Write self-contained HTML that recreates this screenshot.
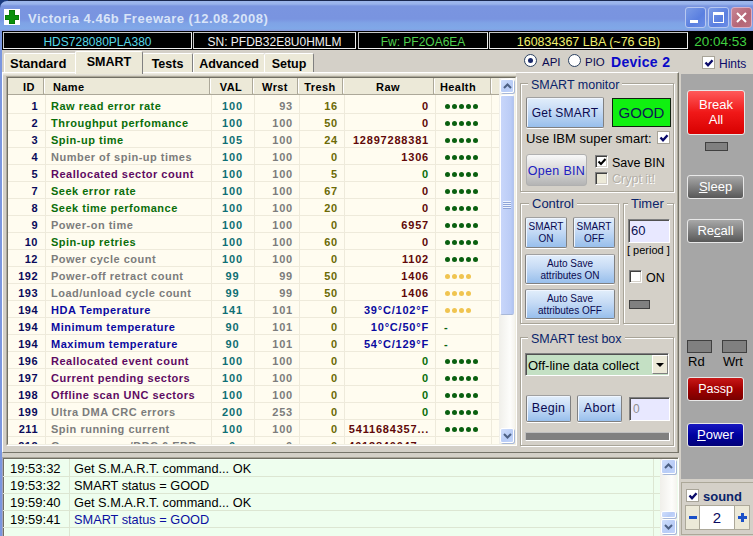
<!DOCTYPE html>
<html><head><meta charset="utf-8"><title>Victoria 4.46b Freeware</title>
<style>
*{margin:0;padding:0;box-sizing:border-box}
html,body{width:753px;height:536px;overflow:hidden}
body{position:relative;background:#D4D0C8;font-family:"Liberation Sans",sans-serif;font-size:12px;color:#000}
.a{position:absolute}
i{font-style:normal}
/* window frame */
#top0{left:0;top:0;width:753px;height:1px;background:#1A2850}
#frameL{left:0;top:31px;width:2px;height:505px;background:#7A96DF}
#title{left:0;top:1px;width:753px;height:30px;border-radius:7px 0 0 0;
 background:linear-gradient(#9CB6EC 0px,#9AB4EC 3px,#7A95E0 5px,#7994E0 18px,#7FA3E6 22px,#80A8E8 28px,#8A96D8 30px)}
#ico{left:4px;top:9px;width:16px;height:16px;background:#FFFFFF}
#ttext{left:28px;top:11px;font-size:13px;line-height:16px;font-weight:bold;color:#D8E4F8;white-space:nowrap;letter-spacing:0.5px}
.tb{top:7px;width:21px;height:21px;border:1px solid #B8C8F0;border-radius:3px;background:linear-gradient(135deg,#7C9CE6,#5A7FE0 60%,#6B8DE6)}
#tmin{left:685px}
#tmax{left:708px}
#tcls{left:731px;background:linear-gradient(135deg,#C88494,#B46676 60%,#BC7080);border-color:#D8B0C8}
/* info bar */
#info{left:2px;top:31px;width:751px;height:19px;background:#000}
.ib{top:32px;height:17px;border:1px solid #C8C8C8;border-right-color:#F0F0F0;border-bottom-color:#F0F0F0;background:#000;text-align:center;font-size:12px;line-height:15px;padding-top:2px;white-space:nowrap}
/* tabs */
.tab{top:53px;height:19px;background:#ECE9D8;border-top:1px solid #FFF;border-left:1px solid #FFF;border-right:1px solid #808080;font-weight:bold;font-size:12.5px;text-align:center;line-height:18px;padding-top:1px;border-radius:2px 2px 0 0}
#tabsel{top:51px;height:23px;line-height:18px;padding-top:1px;z-index:2}
#page{left:2px;top:72px;width:677px;height:381px;border-top:1px solid #FFF;border-left:1px solid #FFF;border-right:1px solid #76746A;border-bottom:1px solid #76746A}
/* table */
#tbl{left:6px;top:76px;width:511px;height:370px;border:1px solid #ACA899;border-right-color:#FFF;border-bottom-color:#FFF;background:#FFFCF0;overflow:hidden}
#tblin{left:7px;top:77px;width:509px;height:368px;border:1px solid #716F64;border-right-color:#F1EFE2;border-bottom-color:#F1EFE2}
#hdr{left:8px;top:78px;width:491px;height:17px;background:#ECE9D8;border-bottom:1px solid #ACA899}
.hc{top:78px;height:16px;font-weight:bold;font-size:11px;letter-spacing:0.4px;line-height:18px;text-align:center;border-right:1px solid #ACA899}
.hc:after{content:"";position:absolute;right:-2px;top:1px;width:1px;height:14px;background:#FFF}
.vl{position:absolute;top:95px;width:1px;height:350px;background:#EEEADB}
.hl{position:absolute;left:8px;width:491px;height:1px;background:#EEEADB}
.tr{position:absolute;left:0;width:500px;height:17px;font-weight:bold;font-size:11px;letter-spacing:0.5px;line-height:18px}
.c{position:absolute;top:0;white-space:nowrap}
.cid{left:8px;width:30px;text-align:right;color:#0A0A5A}
.cnm{left:51px;color:#006600}
.ng{color:#0A6E0A}.ns{color:#7C7C7C}.np{color:#5E0A62}.nb{color:#0A0AA0}
.cval{left:210px;width:45px;text-align:center;color:#0F6F74;letter-spacing:0.8px}
.cwr{left:254px;width:39px;text-align:right;color:#7C7C7C;letter-spacing:0.8px}
.ctr{left:298px;width:40px;text-align:right;color:#6C6A06;letter-spacing:0.8px}
.craw{left:343px;width:86px;text-align:right;letter-spacing:0.8px}
.rr{color:#600808}.rg{color:#0A6E0A}.rb{color:#0A0AA0}
.chl{left:444px}
.hg,.hy{display:block;position:absolute;top:7px;left:1px;height:6px;width:40px}
.hg b,.hy b{float:left;width:5px;height:5px;border-radius:50%;margin-right:2px;background:#0A6010}
.hy b{background:#F0C450}
.hd{color:#0A6010}
/* scrollbar */
#sb{left:499px;top:78px;width:16px;height:366px;background:linear-gradient(90deg,#F0EFEA,#FDFDFB 70%,#F4F3EE)}
.sbtn{width:14px;height:14px;border:1px solid #FFF;border-radius:2px;background:linear-gradient(135deg,#D0DEFC,#B8CCF6 60%,#C4D6FC);box-shadow:1px 1px 0 #A8B8D8}
#sbup{left:500px;top:79px}
#sbdn{left:500px;top:428px;height:15px}
#thumb{left:500px;top:95px;width:14px;height:220px;border:1px solid #FFF;border-right-color:#B4C4EC;border-bottom-color:#A8B8D8;border-radius:2px;background:linear-gradient(90deg,#C8D6FA,#BBCCF6 80%,#B0C4F2)}
/* splitter */
#split{display:none}
/* log */
#log{left:2px;top:457px;width:677px;height:79px;background:#EEFEEE;border-top:1px solid #A8A498;border-left:1px solid #A4A6C0;border-right:1px solid #FFF;box-shadow:inset 1px 1px 0 #716F64,inset 2px 2px 0 #F6FFF6}
.lr{position:absolute;left:0;width:657px;height:17px;font-size:12.5px;line-height:17px;white-space:nowrap;border-bottom:1px solid #DCE6D2}
.lt{position:absolute;left:7px;font-size:13px}
.lm{position:absolute;left:71px;font-size:12.75px}
#lsep{left:69px;top:459px;width:1px;height:77px;background:#DCE6D2}
#lsep2{left:653px;top:459px;width:1px;height:77px;background:#DCE6D2}
#lsb{left:660px;top:459px;width:17px;height:77px;background:linear-gradient(90deg,#F0EFEA,#FDFDFB 70%,#F4F3EE)}
/* group boxes */
.gb{border:1px solid #A8A498;box-shadow:inset 1px 1px 0 #FFF,1px 1px 0 #FFF}
.gt{background:#D4D0C8;padding:0 3px;color:#0A246A;font-size:12.5px;line-height:14px;white-space:nowrap}
.bb{border:1px solid #808080;border-top-color:#A0A0A0;border-radius:2px;background:linear-gradient(#E2EEFB,#C6DBF5 45%,#98BFEC);color:#0A0A50;text-align:center;white-space:nowrap;box-shadow:0 1px 0 #FFF,inset 1px 1px 0 #F0F6FF}
.cb{width:13px;height:13px;background:#FFF;border:1px solid #808080;border-right-color:#FFF;border-bottom-color:#FFF;box-shadow:inset 1px 1px 0 #404040,inset -1px -1px 0 #D4D0C8}
.cbf{border:1px solid #A8A498;box-shadow:none}
.rbtn{border:1px solid #E8E8E8;border-radius:3px;color:#FFF;text-align:center;white-space:nowrap}
.led{background:#808080;border:1px solid #404040}
/* right panel */
#rp{left:681px;top:74px;width:72px;height:405px;background:#A6A6A6}
</style></head><body>
<div class="a" id="top0"></div><div class="a" style="left:0;top:0;width:8px;height:8px;background:#1A3A80"></div>
<div class="a" id="title"></div>
<div class="a" id="frameL"></div>
<div class="a" id="ico"><svg width="16" height="16" viewBox="0 0 16 16"><path d="M5 1h6v5h4v5h-4v4h-6v-4h-4v-5h4z" fill="#006A00"/><path d="M5.5 1.5h5v5h4v4h-4v4h-5v-4h-4v-4h4z" fill="#0C900C"/></svg></div>
<div class="a" id="ttext">Victoria 4.46b Freeware (12.08.2008)</div>
<div class="a tb" id="tmin"><div class="a" style="left:4px;top:12px;width:8px;height:3px;background:#FFF"></div></div>
<div class="a tb" id="tmax"><div class="a" style="left:4px;top:4px;width:11px;height:11px;border:1px solid #FFF;border-top-width:3px"></div></div>
<div class="a tb" id="tcls"><svg class="a" style="left:3px;top:3px" width="13" height="13" viewBox="0 0 13 13"><path d="M2 2L11 11M11 2L2 11" stroke="#FFF" stroke-width="2"/></svg></div>

<div class="a" id="info"></div>
<div class="a ib" style="left:3px;width:189px;color:#58D8E8">HDS728080PLA380</div>
<div class="a ib" style="left:193px;width:163px;color:#F0F0F0">SN: PFDB32E8U0HMLM</div>
<div class="a ib" style="left:358px;width:130px;color:#50D050">Fw: PF2OA6EA</div>
<div class="a ib" style="left:489px;width:199px;color:#F0F070;font-size:12.5px">160834367 LBA (~76 GB)</div>
<div class="a" style="left:688px;top:32px;width:65px;height:17px;color:#40D040;text-align:center;font-size:13.5px;line-height:17px;padding-top:1px">20:04:53</div>

<div class="a" id="page"></div>
<div class="a tab" style="left:4px;width:72px;font-size:13px;text-align:left;padding-left:5px">Standard</div>
<div class="a tab" id="tabsel" style="left:75px;width:68px">SMART</div>
<div class="a tab" style="left:142px;width:51px">Tests</div>
<div class="a tab" style="left:193px;width:72px">Advanced</div>
<div class="a tab" style="left:264px;width:50px">Setup</div>

<!-- radio row -->
<div class="a" style="left:524px;top:54px;width:13px;height:13px;border-radius:50%;border:1.5px solid #2A4060;background:#FFFFFF"><div class="a" style="left:3px;top:3px;width:5px;height:5px;border-radius:50%;background:#21A121;background:#1A2A6A"></div></div>
<div class="a" style="left:542px;top:55px;font-size:11.5px;line-height:14px;color:#0A0A50">API</div>
<div class="a" style="left:568px;top:54px;width:13px;height:13px;border-radius:50%;border:1.5px solid #2A4060;background:#FFFFFF"></div>
<div class="a" style="left:585px;top:55px;font-size:11.5px;line-height:14px;color:#0A0A50">PIO</div>
<div class="a" style="left:611px;top:54px;font-size:14px;font-weight:bold;line-height:16px;letter-spacing:0.3px;color:#0A0AC8">Device 2</div>
<div class="a cb cbf" style="left:702px;top:56px;"><svg class="a" style="left:1px;top:1px" width="10" height="10" viewBox="0 0 10 10"><path d="M1.5 4.5L4 7.2L8.5 2.2" stroke="#0A0A6A" stroke-width="2.4" fill="none"/></svg></div>
<div class="a" style="left:719px;top:57px;font-size:12px;line-height:14px;color:#0A0A6A">Hints</div>

<!-- table -->
<div class="a" style="left:3px;top:73px;width:513px;height:3px;background:linear-gradient(#F2F0E6,#E2DFD4 60%,#CFCCC0)"></div>
<div class="a" id="tbl"></div>
<div class="a" id="tblin"></div>
<div class="a" style="left:0;top:0;width:499px;height:444px;overflow:hidden">
<div class="vl" style="left:45px"></div>
<div class="vl" style="left:211px"></div>
<div class="vl" style="left:254px"></div>
<div class="vl" style="left:299px"></div>
<div class="vl" style="left:344px"></div>
<div class="vl" style="left:435px"></div>
<div class="vl" style="left:491px"></div>
<div class="vl" style="left:499px"></div>
<div class="hl" style="top:113px"></div>
<div class="hl" style="top:130px"></div>
<div class="hl" style="top:147px"></div>
<div class="hl" style="top:164px"></div>
<div class="hl" style="top:181px"></div>
<div class="hl" style="top:198px"></div>
<div class="hl" style="top:215px"></div>
<div class="hl" style="top:232px"></div>
<div class="hl" style="top:249px"></div>
<div class="hl" style="top:266px"></div>
<div class="hl" style="top:283px"></div>
<div class="hl" style="top:300px"></div>
<div class="hl" style="top:317px"></div>
<div class="hl" style="top:334px"></div>
<div class="hl" style="top:351px"></div>
<div class="hl" style="top:368px"></div>
<div class="hl" style="top:385px"></div>
<div class="hl" style="top:402px"></div>
<div class="hl" style="top:419px"></div>
<div class="hl" style="top:436px"></div>
<div class="hl" style="top:453px"></div>
<div class="tr" style="top:97px"><i class="c cid">1</i><i class="c cnm ng">Raw read error rate</i><i class="c cval">100</i><i class="c cwr">93</i><i class="c ctr">16</i><i class="c craw rr">0</i><i class="c chl"><span class="hg"><b></b><b></b><b></b><b></b><b></b></span></i></div>
<div class="tr" style="top:114px"><i class="c cid">2</i><i class="c cnm ng">Throughput perfomance</i><i class="c cval">100</i><i class="c cwr">100</i><i class="c ctr">50</i><i class="c craw rr">0</i><i class="c chl"><span class="hg"><b></b><b></b><b></b><b></b><b></b></span></i></div>
<div class="tr" style="top:131px"><i class="c cid">3</i><i class="c cnm ng">Spin-up time</i><i class="c cval">105</i><i class="c cwr">100</i><i class="c ctr">24</i><i class="c craw rr">12897288381</i><i class="c chl"><span class="hg"><b></b><b></b><b></b><b></b><b></b></span></i></div>
<div class="tr" style="top:148px"><i class="c cid">4</i><i class="c cnm ns">Number of spin-up times</i><i class="c cval">100</i><i class="c cwr">100</i><i class="c ctr">0</i><i class="c craw rr">1306</i><i class="c chl"><span class="hg"><b></b><b></b><b></b><b></b><b></b></span></i></div>
<div class="tr" style="top:165px"><i class="c cid">5</i><i class="c cnm np">Reallocated sector count</i><i class="c cval">100</i><i class="c cwr">100</i><i class="c ctr">5</i><i class="c craw rg">0</i><i class="c chl"><span class="hg"><b></b><b></b><b></b><b></b><b></b></span></i></div>
<div class="tr" style="top:182px"><i class="c cid">7</i><i class="c cnm ng">Seek error rate</i><i class="c cval">100</i><i class="c cwr">100</i><i class="c ctr">67</i><i class="c craw rr">0</i><i class="c chl"><span class="hg"><b></b><b></b><b></b><b></b><b></b></span></i></div>
<div class="tr" style="top:199px"><i class="c cid">8</i><i class="c cnm ng">Seek time perfomance</i><i class="c cval">100</i><i class="c cwr">100</i><i class="c ctr">20</i><i class="c craw rr">0</i><i class="c chl"><span class="hg"><b></b><b></b><b></b><b></b><b></b></span></i></div>
<div class="tr" style="top:216px"><i class="c cid">9</i><i class="c cnm ns">Power-on time</i><i class="c cval">100</i><i class="c cwr">100</i><i class="c ctr">0</i><i class="c craw rr">6957</i><i class="c chl"><span class="hg"><b></b><b></b><b></b><b></b><b></b></span></i></div>
<div class="tr" style="top:233px"><i class="c cid">10</i><i class="c cnm ng">Spin-up retries</i><i class="c cval">100</i><i class="c cwr">100</i><i class="c ctr">60</i><i class="c craw rr">0</i><i class="c chl"><span class="hg"><b></b><b></b><b></b><b></b><b></b></span></i></div>
<div class="tr" style="top:250px"><i class="c cid">12</i><i class="c cnm ns">Power cycle count</i><i class="c cval">100</i><i class="c cwr">100</i><i class="c ctr">0</i><i class="c craw rr">1102</i><i class="c chl"><span class="hg"><b></b><b></b><b></b><b></b><b></b></span></i></div>
<div class="tr" style="top:267px"><i class="c cid">192</i><i class="c cnm ns">Power-off retract count</i><i class="c cval">99</i><i class="c cwr">99</i><i class="c ctr">50</i><i class="c craw rr">1406</i><i class="c chl"><span class="hy"><b></b><b></b><b></b><b></b></span></i></div>
<div class="tr" style="top:284px"><i class="c cid">193</i><i class="c cnm ns">Load/unload cycle count</i><i class="c cval">99</i><i class="c cwr">99</i><i class="c ctr">50</i><i class="c craw rr">1406</i><i class="c chl"><span class="hy"><b></b><b></b><b></b><b></b></span></i></div>
<div class="tr" style="top:301px"><i class="c cid">194</i><i class="c cnm nb">HDA Temperature</i><i class="c cval">141</i><i class="c cwr">101</i><i class="c ctr">0</i><i class="c craw rb">39&deg;C/102&deg;F</i><i class="c chl"><span class="hy"><b></b><b></b><b></b><b></b></span></i></div>
<div class="tr" style="top:318px"><i class="c cid">194</i><i class="c cnm nb">Minimum temperature</i><i class="c cval">90</i><i class="c cwr">101</i><i class="c ctr">0</i><i class="c craw rb">10&deg;C/50&deg;F</i><i class="c chl"><span class="hd">-</span></i></div>
<div class="tr" style="top:335px"><i class="c cid">194</i><i class="c cnm nb">Maximum temperature</i><i class="c cval">90</i><i class="c cwr">101</i><i class="c ctr">0</i><i class="c craw rb">54&deg;C/129&deg;F</i><i class="c chl"><span class="hd">-</span></i></div>
<div class="tr" style="top:352px"><i class="c cid">196</i><i class="c cnm np">Reallocated event count</i><i class="c cval">100</i><i class="c cwr">100</i><i class="c ctr">0</i><i class="c craw rg">0</i><i class="c chl"><span class="hg"><b></b><b></b><b></b><b></b><b></b></span></i></div>
<div class="tr" style="top:369px"><i class="c cid">197</i><i class="c cnm np">Current pending sectors</i><i class="c cval">100</i><i class="c cwr">100</i><i class="c ctr">0</i><i class="c craw rg">0</i><i class="c chl"><span class="hg"><b></b><b></b><b></b><b></b><b></b></span></i></div>
<div class="tr" style="top:386px"><i class="c cid">198</i><i class="c cnm np">Offline scan UNC sectors</i><i class="c cval">100</i><i class="c cwr">100</i><i class="c ctr">0</i><i class="c craw rg">0</i><i class="c chl"><span class="hg"><b></b><b></b><b></b><b></b><b></b></span></i></div>
<div class="tr" style="top:403px"><i class="c cid">199</i><i class="c cnm ns">Ultra DMA CRC errors</i><i class="c cval">200</i><i class="c cwr">253</i><i class="c ctr">0</i><i class="c craw rg">0</i><i class="c chl"><span class="hg"><b></b><b></b><b></b><b></b><b></b></span></i></div>
<div class="tr" style="top:420px"><i class="c cid">211</i><i class="c cnm ns">Spin running current</i><i class="c cval">100</i><i class="c cwr">100</i><i class="c ctr">0</i><i class="c craw rr">5411684357...</i><i class="c chl"><span class="hg"><b></b><b></b><b></b><b></b><b></b></span></i></div>
<div class="tr" style="top:437px"><i class="c cid">212</i><i class="c cnm ns">G-sense error/DDC 6 EDD...</i><i class="c cval">0</i><i class="c cwr">0</i><i class="c ctr">0</i><i class="c craw rr">4013840047...</i><i class="c chl"><span class="hg"><b></b><b></b><b></b><b></b><b></b></span></i></div>
</div>
<div class="a" id="hdr"></div>
<div class="a hc" style="left:8px;width:36px">&nbsp;&nbsp;ID</div>
<div class="a hc" style="left:44px;width:166px;text-align:left;padding-left:9px">Name</div>
<div class="a hc" style="left:210px;width:43px">VAL</div>
<div class="a hc" style="left:253px;width:45px">Wrst</div>
<div class="a hc" style="left:298px;width:45px">Tresh</div>
<div class="a hc" style="left:343px;width:91px">Raw</div>
<div class="a hc" style="left:434px;width:57px;text-align:left;padding-left:6px">Health</div>
<div class="a hc" style="left:491px;width:8px;border-right:none"></div>
<div class="a" id="sb"></div>
<div class="a sbtn" id="sbup"><svg class="a" style="left:2px;top:3px" width="9" height="6" viewBox="0 0 9 6"><path d="M1 5L4.5 1.5L8 5" stroke="#4D6185" stroke-width="2" fill="none"/></svg></div>
<div class="a" id="thumb"><div class="a" style="left:2px;top:105px;width:8px;height:8px;background:repeating-linear-gradient(#EEF4FE 0 1px,#8EA4D8 1px 2px)"></div></div>
<div class="a sbtn" id="sbdn"><svg class="a" style="left:2px;top:4px" width="9" height="6" viewBox="0 0 9 6"><path d="M1 1L4.5 4.5L8 1" stroke="#4D6185" stroke-width="2" fill="none"/></svg></div>

<!-- splitter & log -->
<div class="a" id="split"></div>
<div class="a" id="log">
<div class="lr" style="top:2px"><span class="lt">19:53:32</span><span class="lm">Get S.M.A.R.T. command... OK</span></div>
<div class="lr" style="top:19px"><span class="lt">19:53:32</span><span class="lm">SMART status = GOOD</span></div>
<div class="lr" style="top:36px"><span class="lt">19:59:40</span><span class="lm">Get S.M.A.R.T. command... OK</span></div>
<div class="lr" style="top:53px"><span class="lt">19:59:41</span><span class="lm" style="color:#0A10A0">SMART status = GOOD</span></div>
<div class="lr" style="top:70px"></div>
</div>
<div class="a" id="lsep"></div>
<div class="a" id="lsep2"></div>
<div class="a" id="lsb"></div>
<div class="a sbtn" style="left:661px;top:459px;width:15px;height:15px"><svg class="a" style="left:2px;top:3px" width="9" height="6" viewBox="0 0 9 6"><path d="M1 5L4.5 1.5L8 5" stroke="#4D6185" stroke-width="2" fill="none"/></svg></div>
<div class="a sbtn" style="left:661px;top:511px;width:15px;height:7px"></div>
<div class="a sbtn" style="left:661px;top:519px;width:15px;height:15px"><svg class="a" style="left:2px;top:4px" width="9" height="6" viewBox="0 0 9 6"><path d="M1 1L4.5 4.5L8 1" stroke="#4D6185" stroke-width="2" fill="none"/></svg></div>

<!-- SMART monitor group -->
<div class="a gb" style="left:520px;top:83px;width:154px;height:109px"></div>
<div class="a gt" style="left:528px;top:78px;font-size:12.5px">SMART monitor</div>
<div class="a bb" style="left:526px;top:97px;width:78px;height:31px;line-height:31px;font-size:12px;letter-spacing:0.25px">Get SMART</div>
<div class="a" style="left:612px;top:98px;width:59px;height:29px;background:#10F010;border:1px solid #102010;color:#0A2050;font-size:15px;line-height:27px;text-align:center">GOOD</div>
<div class="a" style="left:526px;top:131px;font-size:13px;line-height:16px;white-space:nowrap">Use IBM super smart:</div>
<div class="a cb cbf" style="left:657px;top:131px"><svg class="a" style="left:1px;top:1px" width="10" height="10" viewBox="0 0 10 10"><path d="M1.5 4.5L4 7.2L8.5 2.2" stroke="#0A0A6A" stroke-width="2.4" fill="none"/></svg></div>
<div class="a" style="left:526px;top:154px;width:61px;height:32px;border:1px solid #B0B0B0;border-radius:3px;background:linear-gradient(#F8F8F8,#D8D8D8 50%,#B4B4B4);color:#2020C0;text-align:center;line-height:32px;font-size:12.5px;letter-spacing:0.3px">Open BIN</div>
<div class="a cb" style="left:595px;top:155px;"><svg class="a" style="left:1px;top:1px" width="10" height="10" viewBox="0 0 10 10"><path d="M1.5 4.5L4 7L8.5 2" stroke="#000" stroke-width="2" fill="none"/></svg></div>
<div class="a" style="left:612px;top:155px;font-size:12.5px;line-height:16px;white-space:nowrap">Save BIN</div>
<div class="a cb" style="left:595px;top:172px;background:#ECE9D8"></div>
<div class="a" style="left:612px;top:171px;font-size:12.5px;line-height:16px;white-space:nowrap;color:#B4B0A8;text-shadow:1px 1px 0 #FFF">Crypt it!</div>

<!-- Control group -->
<div class="a gb" style="left:520px;top:203px;width:99px;height:121px"></div>
<div class="a gt" style="left:529px;top:196px;font-size:13px;line-height:16px">Control</div>
<div class="a bb" style="left:525px;top:217px;width:42px;height:31px;font-size:10px;line-height:12px;padding-top:3px">SMART<br>ON</div>
<div class="a bb" style="left:573px;top:217px;width:42px;height:31px;font-size:10px;line-height:12px;padding-top:3px">SMART<br>OFF</div>
<div class="a bb" style="left:525px;top:254px;width:90px;height:30px;font-size:10px;line-height:12px;padding-top:3px">Auto Save<br>attributes ON</div>
<div class="a bb" style="left:525px;top:289px;width:90px;height:30px;font-size:10px;line-height:12px;padding-top:3px">Auto Save<br>attributes OFF</div>

<!-- Timer group -->
<div class="a gb" style="left:623px;top:203px;width:51px;height:121px"></div>
<div class="a gt" style="left:628px;top:196px;font-size:13px;line-height:16px">Timer</div>
<div class="a" style="left:628px;top:219px;width:42px;height:24px;background:#E8E8FF;border:1px solid #808080;border-right-color:#FFF;border-bottom-color:#FFF;box-shadow:inset 1px 1px 0 #505050;color:#0A1050;font-size:13px;line-height:21px;padding-left:2px">60</div>
<div class="a" style="left:627px;top:243px;font-size:11px;line-height:14px;white-space:nowrap">[ period ]</div>
<div class="a cb" style="left:629px;top:270px;"></div>
<div class="a" style="left:646px;top:271px;font-size:12.5px;line-height:14px">ON</div>
<div class="a led" style="left:629px;top:300px;width:21px;height:9px"></div>

<!-- SMART test box -->
<div class="a gb" style="left:520px;top:337px;width:154px;height:109px"></div>
<div class="a gt" style="left:528px;top:332px;font-size:12.5px">SMART test box</div>
<div class="a" style="left:525px;top:353px;width:144px;height:23px;background:#C4E0C4;border:1px solid #808080;border-right-color:#FFF;border-bottom-color:#FFF;box-shadow:inset 1px 1px 0 #505050;font-size:13px;line-height:24px;padding-left:2px;white-space:nowrap">Off-line data collect</div>
<div class="a" style="left:652px;top:355px;width:16px;height:19px;background:#ECE9D8;border:1px solid #FFF;border-right-color:#808080;border-bottom-color:#808080"><div class="a" style="left:3px;top:7px;width:0;height:0;border-left:4px solid transparent;border-right:4px solid transparent;border-top:4px solid #000"></div></div>
<div class="a bb" style="left:526px;top:395px;width:45px;height:27px;font-size:12.5px;line-height:25px;letter-spacing:0.3px">Begin</div>
<div class="a bb" style="left:577px;top:395px;width:45px;height:27px;font-size:12.5px;line-height:25px;letter-spacing:0.3px">Abort</div>
<div class="a" style="left:629px;top:397px;width:41px;height:24px;background:#E8E8FF;border:1px solid #808080;border-right-color:#FFF;border-bottom-color:#FFF;box-shadow:inset 1px 1px 0 #505050;color:#909090;font-size:12px;line-height:23px;padding-left:3px">0</div>
<div class="a" style="left:525px;top:432px;width:145px;height:9px;background:#808080;border:1px solid #C0C0C0;border-right-color:#FFF;border-bottom-color:#FFF"></div>

<!-- middle panel border -->
<div class="a" style="left:677px;top:73px;width:1px;height:379px;background:#ACA899"></div>

<!-- right panel -->
<div class="a" id="rp"></div>
<div class="a rbtn" style="left:687px;top:90px;width:58px;height:45px;background:linear-gradient(#FF5A5A,#F01818 50%,#D80000);font-size:13px;line-height:15px;padding-top:6px">Break<br>All</div>
<div class="a led" style="left:705px;top:142px;width:23px;height:9px"></div>
<div class="a rbtn" style="left:687px;top:175px;width:57px;height:24px;background:linear-gradient(#A8A8A8,#808080 50%,#585858);font-size:13px;line-height:22px"><u>S</u>leep</div>
<div class="a rbtn" style="left:687px;top:219px;width:57px;height:24px;background:linear-gradient(#A8A8A8,#808080 50%,#585858);font-size:13px;line-height:22px">Re<u>c</u>all</div>
<div class="a led" style="left:687px;top:340px;width:25px;height:13px"></div>
<div class="a led" style="left:722px;top:340px;width:25px;height:13px"></div>
<div class="a" style="left:688px;top:354px;font-size:13px;line-height:16px">Rd</div>
<div class="a" style="left:723px;top:354px;font-size:13px;line-height:16px">Wrt</div>
<div class="a rbtn" style="left:687px;top:377px;width:57px;height:24px;background:linear-gradient(#C81818,#A00000 50%,#780000);font-size:12.5px;line-height:22px">Passp</div>
<div class="a rbtn" style="left:687px;top:423px;width:57px;height:24px;background:linear-gradient(#1818C0,#0000A0 50%,#000078);font-size:13px;line-height:22px"><u>P</u>ower</div>

<!-- sound box -->
<div class="a" style="left:679px;top:479px;width:74px;height:57px;background:#D4D0C8"></div>
<div class="a" style="left:681px;top:482px;width:72px;height:53px;border:1px solid #ACA899;border-right:none"></div>
<div class="a cb cbf" style="left:686px;top:489px;"><svg class="a" style="left:1px;top:1px" width="10" height="10" viewBox="0 0 10 10"><path d="M1.5 4.5L4 7.2L8.5 2.2" stroke="#0A0A6A" stroke-width="2.4" fill="none"/></svg></div>
<div class="a" style="left:703px;top:489px;font-size:13px;font-weight:bold;line-height:16px;color:#0A246A">sound</div>
<div class="a" style="left:685px;top:505px;width:15px;height:25px;background:#ECE9D8;border:1px solid #ACA899;"><div class="a" style="left:3px;top:10px;width:8px;height:3px;background:#1A50C8"></div></div>
<div class="a" style="left:700px;top:505px;width:34px;height:25px;background:#FFF;border-top:1px solid #ACA899;border-bottom:1px solid #ACA899;color:#0A0A60;font-size:15px;text-align:center;line-height:23px">2</div>
<div class="a" style="left:734px;top:505px;width:16px;height:25px;background:#ECE9D8;border:1px solid #ACA899;"><div class="a" style="left:3px;top:10px;width:9px;height:3px;background:#1A50C8"></div><div class="a" style="left:6px;top:7px;width:3px;height:9px;background:#1A50C8"></div></div>
</body></html>
